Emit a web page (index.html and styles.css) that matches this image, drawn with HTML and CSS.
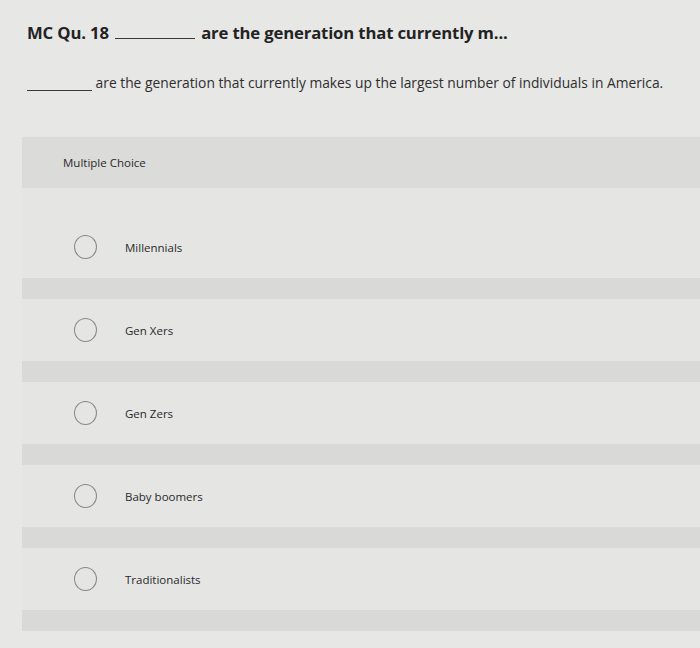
FILE: index.html
```html
<!DOCTYPE html>
<html>
<head>
<meta charset="utf-8">
<link rel="stylesheet" href="styles.css">
</head>
<body>
<div class="page">
  <header class="q-head">
    <h1 class="q-title">MC Qu. 18 <span class="blank blank-title"></span> are the generation that currently m...</h1>
    <p class="q-text"><span class="blank blank-text"></span> are the generation that currently makes up the largest number of individuals in America.</p>
  </header>
  <section class="panel">
    <div class="panel-head">Multiple Choice</div>
    <div class="panel-gap"></div>
    <ul class="options">
      <li class="option"><span class="radio"></span><span class="label">Millennials</span></li>
      <li class="sep"></li>
      <li class="option"><span class="radio"></span><span class="label">Gen Xers</span></li>
      <li class="sep"></li>
      <li class="option"><span class="radio"></span><span class="label">Gen Zers</span></li>
      <li class="sep"></li>
      <li class="option"><span class="radio"></span><span class="label">Baby boomers</span></li>
      <li class="sep"></li>
      <li class="option"><span class="radio"></span><span class="label">Traditionalists</span></li>
      <li class="sep"></li>
    </ul>
  </section>
</div>
</body>
</html>
```

FILE: styles.css
```css
html, body {
  margin: 0;
  padding: 0;
}
body {
  background: #e7e7e6;
  font-family: "Open Sans", Lato, "Liberation Sans", sans-serif;
  color: #2b2b2b;
  width: 700px;
  height: 648px;
  overflow: hidden;
}
.q-head {
  padding: 22px 0 0 27px;
  height: 115px;
  box-sizing: border-box;
}
.q-title {
  margin: 0;
  font-size: 16.7px;
  font-weight: 700;
  line-height: 22px;
  letter-spacing: -0.15px;
  color: #232323;
}
.blank {
  display: inline-block;
  border-bottom: 1.5px solid #3a3a3a;
  vertical-align: baseline;
}
.blank-title {
  width: 80px;
  margin: 0 2px;
}
.q-text {
  margin: 30px 0 0 0;
  font-size: 13.8px;
  line-height: 18px;
  color: #2e2e2e;
}
.blank-text {
  width: 65px;
  border-bottom-width: 1px;
  transform: translateY(3px);
}
.panel {
  margin: 22px 0 0 22px;
  background: #e5e5e4;
}
.panel-head {
  height: 51px;
  background: #dbdbda;
  padding-left: 41px;
  display: flex;
  align-items: center;
  font-size: 11.5px;
  color: #2a2a2a;
}
.panel-gap {
  height: 28px;
}
.options {
  list-style: none;
  margin: 0;
  padding: 0;
}
.option {
  height: 62px;
  display: flex;
  align-items: center;
  padding-left: 52px;
}
.sep {
  height: 21px;
  background: #d9d9d8;
}
.radio {
  width: 23px;
  height: 24px;
  border: 1.5px solid #888888;
  border-radius: 50%;
  box-sizing: border-box;
  flex: none;
}
.label {
  margin-left: 28px;
  font-size: 11.5px;
  color: #2a2a2a;
}
```
